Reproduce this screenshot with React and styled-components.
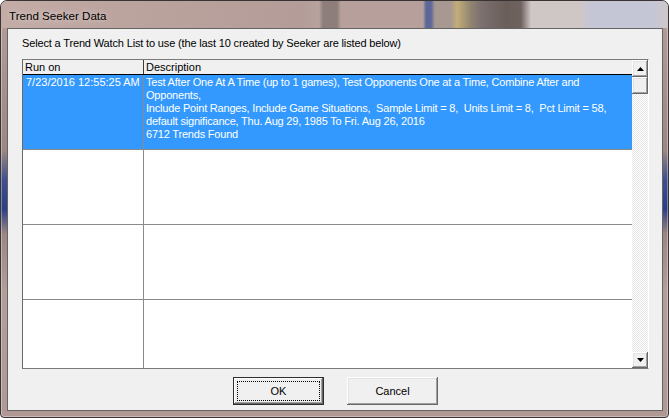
import React from "react";
import styled, { createGlobalStyle, css } from "styled-components";

const GlobalStyle = createGlobalStyle`
  html, body {
    margin: 0;
    padding: 0;
    background: #ffffff;
  }
  * {
    box-sizing: border-box;
  }
`;

const Window = styled.div`
  width: 669px;
  height: 418px;
  display: flex;
  flex-direction: column;
  border: 1px solid #3a3334;
  border-radius: 7px 7px 4px 4px;
  padding: 0 5px 6px 6px;
  overflow: hidden;
  background: linear-gradient(
    180deg,
    #b79f9a 0%,
    #a8908c 20%,
    #9c8683 36%,
    #3e4f8e 43%,
    #2b3f86 50%,
    #9c8683 56%,
    #b59d98 70%,
    #b09894 100%
  );
  box-shadow: inset 0 0 0 1px rgba(255, 255, 255, 0.35);
`;

const TitleBar = styled.div`
  height: 27px;
  flex: none;
  display: flex;
  align-items: center;
  margin: 0 -5px 0 -6px;
  padding: 1px 0 0 8px;
  background: linear-gradient(
    90deg,
    #c4aca7 0px,
    #bba39e 120px,
    #b49d98 300px,
    #b8a29d 318px,
    #8e7e7b 322px,
    #8e7e7b 336px,
    #b7a09b 340px,
    #b7a09b 422px,
    #5c6898 425px,
    #5c6898 430px,
    #a89892 434px,
    #a89892 450px,
    #c3ad78 456px,
    #8f8470 470px,
    #7c7070 480px,
    #6a5e5a 505px,
    #6f6360 520px,
    #cfc6c6 530px,
    #cfc6c6 580px,
    #c4c6d6 590px,
    #c4c6d6 650px,
    #d0c8c8 669px
  );
`;

const Title = styled.span`
  font-family: "Liberation Sans", Arial, sans-serif;
  font-size: 11.6px;
  color: #000000;
  text-shadow: 0 0 6px rgba(255, 255, 255, 0.7);
`;

const Client = styled.div`
  flex: 1;
  display: flex;
  flex-direction: column;
  background: #f0f0f0;
  border: 1px solid #646464;
  padding: 7px 13px 5px 14px;
  font-family: "Liberation Sans", Arial, sans-serif;
  font-size: 11px;
  color: #000000;
`;

const Prompt = styled.div`
  height: 14px;
  line-height: 14px;
  white-space: nowrap;
  letter-spacing: -0.15px;
`;

const ListView = styled.div`
  margin-top: 9px;
  height: 310px;
  flex: none;
  display: flex;
  border-top: 1px solid #7a7a7a;
  border-left: 1px solid #6a6a6a;
  border-right: 1px solid #ffffff;
  border-bottom: 1px solid #7a7a7a;
  background: #ffffff;
`;

const Table = styled.div`
  flex: 1;
  overflow: hidden;
  display: flex;
  flex-direction: column;
`;

const HeaderRow = styled.div`
  display: grid;
  grid-template-columns: 121px 1fr;
  height: 15px;
  flex: none;
  background: #f0f0f0;
  border-bottom: 1px solid #000000;
`;

const HeaderCell = styled.div`
  line-height: 14px;
  padding-left: 2px;
  white-space: nowrap;
  border-right: ${(p) => (p.$last ? "none" : "1px solid #3c3c3c")};
`;

const Row = styled.div`
  display: grid;
  grid-template-columns: 121px 1fr;
  height: 75px;
  flex: none;
  border-bottom: 1px solid #8a8a8a;
  ${(p) =>
    p.$selected &&
    css`
      background: #3399ff;
      color: #ffffff;
    `}
`;

const Cell = styled.div`
  line-height: 13px;
  padding: 1px 0 0 ${(p) => (p.$first ? "3px" : "2px")};
  white-space: pre;
  overflow: hidden;
  letter-spacing: ${(p) => (p.$first ? "0" : "-0.2px")};
  border-right: ${(p) => (p.$first ? "1px solid #8a8a8a" : "none")};
`;

const ScrollBar = styled.div`
  width: 16px;
  flex: none;
  display: flex;
  flex-direction: column;
  background-color: #f4f4f4;
  background-image: conic-gradient(
    #ffffff 25%,
    #e6e6e6 0 50%,
    #ffffff 0 75%,
    #e6e6e6 0
  );
  background-size: 2px 2px;
`;

const bevel = css`
  background: #f0f0f0;
  box-shadow: inset -1px -1px #696969, inset 1px 1px #ffffff,
    inset -2px -2px #a0a0a0, inset 2px 2px #e3e3e3;
`;

const ScrollButton = styled.div`
  ${bevel};
  height: ${(p) => p.$h}px;
  flex: none;
  display: flex;
  align-items: center;
  justify-content: center;
`;

const Track = styled.div`
  flex: 1;
`;

const ButtonRow = styled.div`
  margin-top: 8px;
  display: flex;
  justify-content: center;
  gap: 23px;
`;

const Button = styled.div`
  ${bevel};
  width: 91px;
  height: 28px;
  display: flex;
  align-items: center;
  justify-content: center;
  position: relative;
  ${(p) =>
    p.$default &&
    css`
      border: 1px solid #2e2e2e;
      box-shadow: inset -1px -1px #696969, inset 1px 1px #ffffff,
        inset -2px -2px #a0a0a0;
      &::after {
        content: "";
        position: absolute;
        inset: 3px;
        border: 1px dotted #000000;
      }
    `}
`;

const Arrow = ({ down }) => (
  <svg width="7" height="4" viewBox="0 0 7 4">
    <path d={down ? "M0 0h7L3.5 4z" : "M0 4h7L3.5 0z"} fill="#000000" />
  </svg>
);

const rows = [
  {
    runOn: "7/23/2016 12:55:25 AM",
    text: [
      "Test After One At A Time (up to 1 games), Test Opponents One at a Time, Combine After and",
      "Opponents,",
      "Include Point Ranges, Include Game Situations,  Sample Limit = 8,  Units Limit = 8,  Pct Limit = 58,",
      "default significance, Thu. Aug 29, 1985 To Fri. Aug 26, 2016",
      "6712 Trends Found",
    ],
    selected: true,
  },
  { runOn: "", text: [] },
  { runOn: "", text: [] },
  { runOn: "", text: [] },
];

const App = () => {
  return (
    <>
      <GlobalStyle />
      <Window>
        <TitleBar>
          <Title>Trend Seeker Data</Title>
        </TitleBar>
        <Client>
          <Prompt>
            Select a Trend Watch List to use (the last 10 created by Seeker are
            listed below)
          </Prompt>
          <ListView>
            <Table>
              <HeaderRow>
                <HeaderCell>Run on</HeaderCell>
                <HeaderCell $last>Description</HeaderCell>
              </HeaderRow>
              {rows.map((r, i) => (
                <Row key={i} $selected={r.selected}>
                  <Cell $first>{r.runOn}</Cell>
                  <Cell>{r.text.join("\n")}</Cell>
                </Row>
              ))}
            </Table>
            <ScrollBar>
              <ScrollButton $h={17}>
                <Arrow />
              </ScrollButton>
              <ScrollButton $h={17} />
              <Track />
              <ScrollButton $h={16}>
                <Arrow down />
              </ScrollButton>
            </ScrollBar>
          </ListView>
          <ButtonRow>
            <Button $default>OK</Button>
            <Button>Cancel</Button>
          </ButtonRow>
        </Client>
      </Window>
    </>
  );
};

export default App;
